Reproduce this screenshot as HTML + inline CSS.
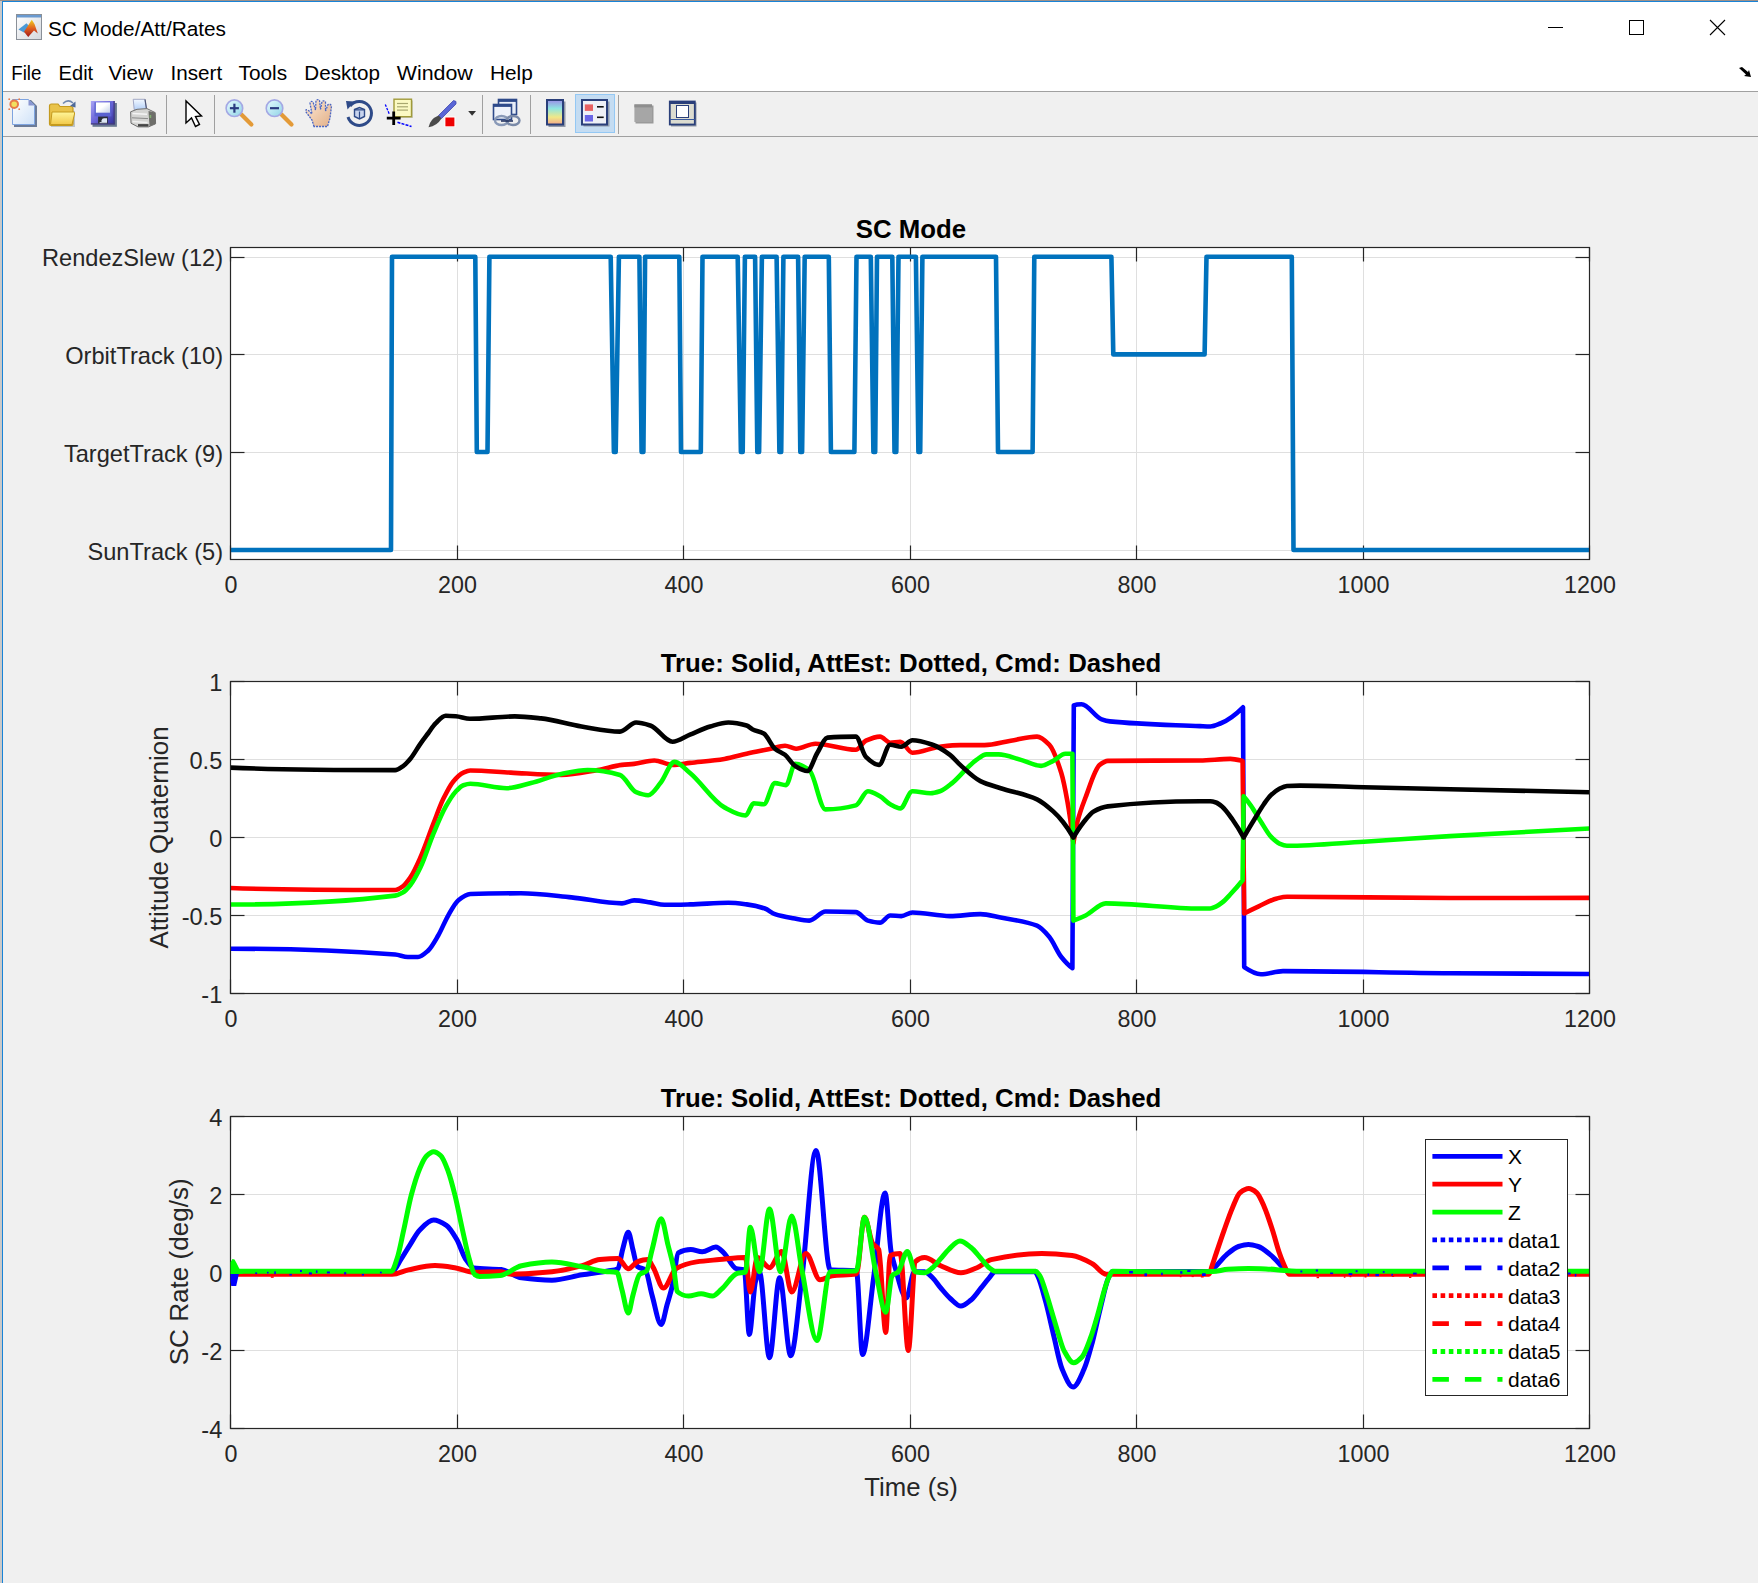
<!DOCTYPE html>
<html><head><meta charset="utf-8"><style>
html,body{margin:0;padding:0;width:1758px;height:1583px;overflow:hidden;background:#f0f0f0;font-family:"Liberation Sans",sans-serif}
.abs{position:absolute}
</style></head><body>
<div class="abs" style="left:0;top:0;width:1758px;height:1px;background:#9c9089"></div>
<div class="abs" style="left:0;top:1px;width:2px;height:1582px;background:#c9c9c9"></div>
<div class="abs" style="left:2px;top:1px;width:1756px;height:1582px;background:#1883d7"></div>
<div class="abs" style="left:3px;top:2px;width:1755px;height:89px;background:#ffffff"></div>
<div class="abs" style="left:3px;top:91px;width:1755px;height:1px;background:#a0a0a0"></div>
<div class="abs" style="left:3px;top:92px;width:1755px;height:44px;background:#f0f0f0"></div>
<div class="abs" style="left:3px;top:136px;width:1755px;height:1px;background:#a0a0a0"></div>
<div class="abs" style="left:3px;top:137px;width:1755px;height:1446px;background:#f0f0f0"></div>
<svg width="1758" height="140" style="position:absolute;left:0;top:0"><defs>
<linearGradient id="gPage" x1="0" y1="0" x2="1" y2="1"><stop offset="0" stop-color="#ffffff"/><stop offset="1" stop-color="#cfe2f8"/></linearGradient>
<linearGradient id="gFold" x1="0" y1="0" x2="0" y2="1"><stop offset="0" stop-color="#fff69a"/><stop offset="1" stop-color="#f2c94a"/></linearGradient>
<linearGradient id="gDisk" x1="0" y1="0" x2="1" y2="1"><stop offset="0" stop-color="#a9a4f4"/><stop offset="0.5" stop-color="#6a64d8"/><stop offset="1" stop-color="#2f2f9a"/></linearGradient>
<linearGradient id="gCbar" x1="0" y1="0" x2="0" y2="1"><stop offset="0" stop-color="#9a8ee8"/><stop offset="0.35" stop-color="#8ee6e0"/><stop offset="0.7" stop-color="#f0e888"/><stop offset="1" stop-color="#f4a888"/></linearGradient>
<linearGradient id="gLens" x1="0" y1="0" x2="1" y2="1"><stop offset="0" stop-color="#e8fbff"/><stop offset="1" stop-color="#8fd4e6"/></linearGradient>
<linearGradient id="gHand" x1="0" y1="0" x2="1" y2="1"><stop offset="0" stop-color="#fde8d4"/><stop offset="1" stop-color="#e2b088"/></linearGradient>
<linearGradient id="gPrint" x1="0" y1="0" x2="0" y2="1"><stop offset="0" stop-color="#f4f4f4"/><stop offset="1" stop-color="#9a9a9a"/></linearGradient>
<linearGradient id="gMat" x1="0" y1="0" x2="1" y2="1"><stop offset="0" stop-color="#ffffff"/><stop offset="1" stop-color="#d4d8de"/></linearGradient>
<linearGradient id="gPeak" x1="0" y1="0" x2="0" y2="1"><stop offset="0" stop-color="#f0d020"/><stop offset="0.5" stop-color="#e06020"/><stop offset="1" stop-color="#a01818"/></linearGradient>
</defs><rect x="16.5" y="14.5" width="25" height="25" fill="url(#gMat)" stroke="#8a9098" stroke-width="1"/><rect x="17" y="15" width="24" height="2.5" fill="#6a9ad0"/><path d="M18.4,29.5 L26.5,23.2 L29.5,26.5 L24.5,32.8 Z" fill="#4a9ad8"/><path d="M24,31.8 L31.8,19.8 L34.5,24 L37.8,33.6 L34,30.5 L28.2,37 Z" fill="url(#gPeak)"/><text x="48" y="35.8" font-family="Liberation Sans, sans-serif" font-size="20.5" fill="#000" textLength="178" lengthAdjust="spacingAndGlyphs">SC Mode/Att/Rates</text><line x1="1548" y1="27.5" x2="1563" y2="27.5" stroke="#000" stroke-width="1"/><rect x="1629.5" y="20.5" width="14" height="14" fill="none" stroke="#000" stroke-width="1"/><path d="M1710,20 L1725,35 M1725,20 L1710,35" stroke="#000" stroke-width="1.1" fill="none"/><path d="M1739,68 L1742,67 L1748,72 L1749,70 L1751,77 L1744,76 L1746,74.5 Z" fill="#000"/><text x="11.2" y="79.6" font-family="Liberation Sans, sans-serif" font-size="20" fill="#000" textLength="30.2" lengthAdjust="spacingAndGlyphs">File</text><text x="58.6" y="79.6" font-family="Liberation Sans, sans-serif" font-size="20" fill="#000" textLength="34.6" lengthAdjust="spacingAndGlyphs">Edit</text><text x="108.4" y="79.6" font-family="Liberation Sans, sans-serif" font-size="20" fill="#000" textLength="44.6" lengthAdjust="spacingAndGlyphs">View</text><text x="170.5" y="79.6" font-family="Liberation Sans, sans-serif" font-size="20" fill="#000" textLength="51.7" lengthAdjust="spacingAndGlyphs">Insert</text><text x="238.5" y="79.6" font-family="Liberation Sans, sans-serif" font-size="20" fill="#000" textLength="48.6" lengthAdjust="spacingAndGlyphs">Tools</text><text x="304.3" y="79.6" font-family="Liberation Sans, sans-serif" font-size="20" fill="#000" textLength="75.7" lengthAdjust="spacingAndGlyphs">Desktop</text><text x="396.8" y="79.6" font-family="Liberation Sans, sans-serif" font-size="20" fill="#000" textLength="76.0" lengthAdjust="spacingAndGlyphs">Window</text><text x="490.0" y="79.6" font-family="Liberation Sans, sans-serif" font-size="20" fill="#000" textLength="42.800000000000004" lengthAdjust="spacingAndGlyphs">Help</text><line x1="166.5" y1="95" x2="166.5" y2="134" stroke="#a0a0a0" stroke-width="1"/><line x1="214.5" y1="95" x2="214.5" y2="134" stroke="#a0a0a0" stroke-width="1"/><line x1="482.5" y1="95" x2="482.5" y2="134" stroke="#a0a0a0" stroke-width="1"/><line x1="530.5" y1="95" x2="530.5" y2="134" stroke="#a0a0a0" stroke-width="1"/><line x1="618.5" y1="95" x2="618.5" y2="134" stroke="#a0a0a0" stroke-width="1"/><path d="M14,106 L14,127 L37,127 L37,106 L31,100 L16,100 Z" fill="#6b7b98"/><path d="M12.5,99.5 L28.5,99.5 L34.5,105.5 L34.5,124.5 L12.5,124.5 Z" fill="url(#gPage)" stroke="#7ea4e0" stroke-width="1"/><path d="M28.5,99.5 L28.5,105.5 L34.5,105.5 Z" fill="#8a96d0"/><circle cx="14.2" cy="104.2" r="3.8" fill="#f2e060" stroke="#e87a4a" stroke-width="2"/><circle cx="9.2" cy="99.2" r="0.9" fill="#e87a4a"/><circle cx="19.2" cy="99.2" r="0.9" fill="#e87a4a"/><circle cx="9.2" cy="109.2" r="0.9" fill="#e87a4a"/><circle cx="19.2" cy="109.2" r="0.9" fill="#e87a4a"/><path d="M51,108 L51,127 L75,127 L75,111 Z" fill="#9aa6b4" opacity="0.6"/><path d="M49.5,106 Q49.5,104 51.5,104 L58,104 L60,106.5 L71,106.5 Q73,106.5 73,108.5 L73,124 Q73,125.5 71.5,125.5 L51,125.5 Q49.5,125.5 49.5,124 Z" fill="#e9c34a" stroke="#c49a1e" stroke-width="1.2"/><path d="M52,112 L73.5,112 Q75,112 74.5,114 L72,124.5 L50.5,124.5 Z" fill="url(#gFold)" stroke="#c49a1e" stroke-width="1"/><path d="M63,103.5 Q68,98.5 73,103" fill="none" stroke="#6f88b0" stroke-width="1.6"/><path d="M75.5,101.5 L75.5,107.5 L70,106 Z" fill="#4f6a9a"/><rect x="92.5" y="103" width="24.4" height="23.8" fill="#687890"/><rect x="90.9" y="101" width="23.8" height="23.3" fill="url(#gDisk)"/><rect x="90.9" y="123.3" width="23.8" height="1.2" fill="#433c78"/><rect x="113.5" y="101" width="1.2" height="23.3" fill="#3f3a78"/><rect x="94.5" y="102.2" width="16.9" height="14.2" fill="#5a62d0"/><linearGradient id="gLbl" x1="0" y1="0" x2="1" y2="1"><stop offset="0.45" stop-color="#ffffff"/><stop offset="1" stop-color="#c4d0e8"/></linearGradient><rect x="95.9" y="102.4" width="14.1" height="10.3" fill="url(#gLbl)"/><rect x="98.1" y="116.6" width="9.7" height="6.9" fill="#2a2e38"/><path d="M101.5,123 L101.5,120.5 Q102,118.2 104,118.2 L107,118.2 L107,123 Z" fill="#dce6f4"/><rect x="99.6" y="122" width="7.4" height="1.2" fill="#b8c0cc"/><linearGradient id="gPaper" x1="0" y1="0" x2="0" y2="1"><stop offset="0" stop-color="#f2f8ff"/><stop offset="1" stop-color="#b4d0f8"/></linearGradient><path d="M133.2,99.3 L145,99.3 L146.6,109.6 L134.2,109.6 Z" fill="url(#gPaper)" stroke="#9aa0c0" stroke-width="0.9"/><path d="M145,99.3 L146.6,109.6" stroke="#505878" stroke-width="1.2"/><path d="M130.6,111.8 L137,109.3 L147,108.6 L155.2,112.6 L155.6,123.8 L148.5,126.9 L138,126.9 L131,123.2 Z" fill="#d4d4d2" stroke="#707070" stroke-width="1"/><path d="M148.5,111 L155.2,112.6 L155.6,123.8 L149.5,126.2 Z" fill="#6e6e6a"/><path d="M132.5,113.5 L147,114.2" stroke="#f4f4f4" stroke-width="1.4"/><path d="M132,117.8 L148,118.6" stroke="#8a8a8a" stroke-width="1"/><path d="M132.5,121.5 L147.5,122.5" stroke="#f0f0f0" stroke-width="1.3"/><path d="M138,125.3 L148.5,125.3" stroke="#454545" stroke-width="2.4"/><rect x="149.6" y="115" width="1.6" height="3" fill="#80b070"/><path d="M186,101 L186,123 L191.5,118 L195.5,126.5 L199.5,124.5 L195.5,116.5 L201.5,116 Z" fill="#fff" stroke="#000" stroke-width="1.4" stroke-linejoin="miter"/><line x1="241.4" y1="114.5" x2="251.4" y2="124.5" stroke="#e39a38" stroke-width="4.2" stroke-linecap="round"/><circle cx="234.4" cy="108.2" r="8.3" fill="url(#gLens)" stroke="#a4a8e4" stroke-width="1.6"/><line x1="229.9" y1="108.2" x2="238.9" y2="108.2" stroke="#2a3a80" stroke-width="2.2"/><line x1="234.4" y1="103.7" x2="234.4" y2="112.7" stroke="#2a3a80" stroke-width="2.2"/><line x1="281.5" y1="114.5" x2="291.5" y2="124.5" stroke="#e39a38" stroke-width="4.2" stroke-linecap="round"/><circle cx="274.5" cy="108.2" r="8.3" fill="url(#gLens)" stroke="#a4a8e4" stroke-width="1.6"/><line x1="270.0" y1="108.2" x2="279.0" y2="108.2" stroke="#2a3a80" stroke-width="2.2"/><path d="M314,126.5 L312,120 L306,112 Q305,109 308,110 L312,114 L310,103 Q311,100.5 313,102 L315.5,110 L316,100.5 Q318,98.8 319.5,100.5 L320.5,109.5 L322,101.5 Q324,100 325.5,102 L325.5,111 L328,104.5 Q330.5,103.5 331.5,106 L330,118 L327.5,126.5 Z" fill="url(#gHand)" stroke="#4a66c4" stroke-width="1.3" stroke-dasharray="2 1"/><path d="M350,106 A12,12 0 1 1 348,117" fill="none" stroke="#2e4a88" stroke-width="3"/><path d="M346,101 L354.5,101.5 L347.5,109.5 Z" fill="#2e4a88"/><path d="M354.5,109.5 L359.5,107.5 L364.5,109.5 L364.5,116.5 L359.5,119 L354.5,116.5 Z" fill="#c8d4ee" stroke="#2e4a88" stroke-width="1.4"/><path d="M359.5,111.5 L359.5,118.5 M355,109.8 L364,109.8" stroke="#2e4a88" stroke-width="1.2"/><rect x="395.5" y="100.5" width="17.5" height="17.5" fill="#a4a888" opacity="0.5"/><rect x="394" y="99.2" width="17.5" height="17.5" fill="#fbfac4" stroke="#a09a3a" stroke-width="1.4"/><line x1="397" y1="103.5" x2="408" y2="103.5" stroke="#a8a870" stroke-width="1.2"/><line x1="397" y1="106.8" x2="408" y2="106.8" stroke="#a8a870" stroke-width="1.2"/><line x1="397" y1="110.1" x2="408" y2="110.1" stroke="#a8a870" stroke-width="1.2"/><path d="M385.3,104.5 L389.5,114.5" stroke="#0000ff" stroke-width="1.3" stroke-dasharray="2.5 1.2"/><path d="M397.5,122.3 L411.5,126.5" stroke="#0000ff" stroke-width="1.5" stroke-dasharray="3 1.2"/><path d="M386.8,118.2 L400.6,118.2 M393.7,111.4 L393.7,125" stroke="#000" stroke-width="2.8"/><path d="M438.5,115.5 L453.5,100.5 L456,101.5 L456,104 L441.5,118.5 Z" fill="#5a66d6" stroke="#3f48b0" stroke-width="0.8"/><path d="M438.5,115.5 L441.5,118.5 Q437,126 428.5,127.3 Q430,119 438.5,115.5 Z" fill="#4a4a4a"/><rect x="444.5" y="116.5" width="11" height="10.5" fill="#ffffff"/><rect x="445.4" y="117.5" width="9" height="8.8" fill="#ee0000"/><path d="M468.2,111.1 L476,111.1 L472.1,115.7 Z" fill="#333"/><rect x="498.5" y="99.5" width="18" height="15" fill="#e8eef8" stroke="#2e4a8a" stroke-width="1.6"/><rect x="498.5" y="99.5" width="18" height="2.4" fill="#2e4a8a"/><rect x="493.5" y="104.5" width="18" height="15" fill="#eef2fa" stroke="#2e4a8a" stroke-width="1.6"/><rect x="493.5" y="104.5" width="18" height="2.4" fill="#2e4a8a"/><ellipse cx="501.5" cy="120.5" rx="6.5" ry="4.5" fill="none" stroke="#8a9ab8" stroke-width="2.4"/><ellipse cx="513" cy="120.5" rx="6.5" ry="4.5" fill="none" stroke="#7a8aa8" stroke-width="2.4"/><line x1="501" y1="121" x2="513" y2="121" stroke="#1a2a5a" stroke-width="1.5"/><rect x="548.5" y="101.5" width="17" height="25.5" fill="#6a7488" opacity="0.7"/><rect x="547" y="100" width="16" height="24.5" fill="url(#gCbar)" stroke="#2a3f7a" stroke-width="2"/><rect x="575.5" y="94.5" width="39" height="38" fill="#c4dcf2" stroke="#94c8f4" stroke-width="1"/><rect x="583.5" y="101.5" width="26" height="25" fill="#7a8090" opacity="0.7"/><rect x="582" y="100" width="25" height="24.5" fill="#eef0f6" stroke="#2a3f7a" stroke-width="2"/><rect x="584.8" y="104.4" width="8.2" height="6.5" fill="#e86262"/><rect x="584.8" y="115" width="8.2" height="6.5" fill="#6a66e6"/><line x1="597" y1="106.8" x2="603.7" y2="106.8" stroke="#111" stroke-width="1.6"/><line x1="597" y1="117.3" x2="603.7" y2="117.3" stroke="#111" stroke-width="1.6"/><rect x="635.5" y="105.5" width="18" height="18" fill="#9a9a9a"/><rect x="634.4" y="104.4" width="17.6" height="17.6" fill="#a6a6a6"/><rect x="634.4" y="104.4" width="17.6" height="3" fill="#8e8e8e"/><rect x="671" y="102.5" width="25.5" height="24" fill="#6a7488" opacity="0.7"/><rect x="669.8" y="101.5" width="25" height="23" fill="#dcdcd0" stroke="#2a3f7a" stroke-width="1.8"/><rect x="669.8" y="101.2" width="25" height="2.8" fill="#2a3f7a"/><rect x="676.5" y="105.5" width="12" height="12" fill="#ffffff" stroke="#2a3f7a" stroke-width="1"/><line x1="669.8" y1="119.5" x2="694.8" y2="119.5" stroke="#3a5aa0" stroke-width="1"/></svg>
<svg width="1758" height="1583" style="position:absolute;left:0;top:0"><rect x="230.5" y="247.5" width="1359.0" height="312.0" fill="#ffffff"/><line x1="457.5" y1="247.5" x2="457.5" y2="559.5" stroke="#dfdfdf" stroke-width="1"/><line x1="683.5" y1="247.5" x2="683.5" y2="559.5" stroke="#dfdfdf" stroke-width="1"/><line x1="910.5" y1="247.5" x2="910.5" y2="559.5" stroke="#dfdfdf" stroke-width="1"/><line x1="1136.5" y1="247.5" x2="1136.5" y2="559.5" stroke="#dfdfdf" stroke-width="1"/><line x1="1363.5" y1="247.5" x2="1363.5" y2="559.5" stroke="#dfdfdf" stroke-width="1"/><line x1="230.5" y1="257.5" x2="1589.5" y2="257.5" stroke="#dfdfdf" stroke-width="1"/><line x1="230.5" y1="354.5" x2="1589.5" y2="354.5" stroke="#dfdfdf" stroke-width="1"/><line x1="230.5" y1="452.5" x2="1589.5" y2="452.5" stroke="#dfdfdf" stroke-width="1"/><line x1="230.5" y1="550.5" x2="1589.5" y2="550.5" stroke="#dfdfdf" stroke-width="1"/><line x1="230.5" y1="247.5" x2="230.5" y2="261.5" stroke="#262626" stroke-width="1.2"/><line x1="230.5" y1="559.5" x2="230.5" y2="545.5" stroke="#262626" stroke-width="1.2"/><line x1="457.5" y1="247.5" x2="457.5" y2="261.5" stroke="#262626" stroke-width="1.2"/><line x1="457.5" y1="559.5" x2="457.5" y2="545.5" stroke="#262626" stroke-width="1.2"/><line x1="683.5" y1="247.5" x2="683.5" y2="261.5" stroke="#262626" stroke-width="1.2"/><line x1="683.5" y1="559.5" x2="683.5" y2="545.5" stroke="#262626" stroke-width="1.2"/><line x1="910.5" y1="247.5" x2="910.5" y2="261.5" stroke="#262626" stroke-width="1.2"/><line x1="910.5" y1="559.5" x2="910.5" y2="545.5" stroke="#262626" stroke-width="1.2"/><line x1="1136.5" y1="247.5" x2="1136.5" y2="261.5" stroke="#262626" stroke-width="1.2"/><line x1="1136.5" y1="559.5" x2="1136.5" y2="545.5" stroke="#262626" stroke-width="1.2"/><line x1="1363.5" y1="247.5" x2="1363.5" y2="261.5" stroke="#262626" stroke-width="1.2"/><line x1="1363.5" y1="559.5" x2="1363.5" y2="545.5" stroke="#262626" stroke-width="1.2"/><line x1="1589.5" y1="247.5" x2="1589.5" y2="261.5" stroke="#262626" stroke-width="1.2"/><line x1="1589.5" y1="559.5" x2="1589.5" y2="545.5" stroke="#262626" stroke-width="1.2"/><line x1="230.5" y1="257.5" x2="244.5" y2="257.5" stroke="#262626" stroke-width="1.2"/><line x1="1589.5" y1="257.5" x2="1575.5" y2="257.5" stroke="#262626" stroke-width="1.2"/><line x1="230.5" y1="354.5" x2="244.5" y2="354.5" stroke="#262626" stroke-width="1.2"/><line x1="1589.5" y1="354.5" x2="1575.5" y2="354.5" stroke="#262626" stroke-width="1.2"/><line x1="230.5" y1="452.5" x2="244.5" y2="452.5" stroke="#262626" stroke-width="1.2"/><line x1="1589.5" y1="452.5" x2="1575.5" y2="452.5" stroke="#262626" stroke-width="1.2"/><line x1="230.5" y1="550.5" x2="244.5" y2="550.5" stroke="#262626" stroke-width="1.2"/><line x1="1589.5" y1="550.5" x2="1575.5" y2="550.5" stroke="#262626" stroke-width="1.2"/><clipPath id="c1"><rect x="230.5" y="247.5" width="1359.0" height="312"/></clipPath><polyline points="230.5,550.0 391.0,550.0 392.0,256.7 475.3,256.7 476.8,452.0 487.5,452.0 489.4,256.7 610.7,256.7 613.9,452.0 615.7,452.0 618.9,256.7 639.4,256.7 641.6,452.0 643.4,452.0 645.1,256.7 679.3,256.7 681.0,452.0 700.8,452.0 702.5,256.7 737.7,256.7 740.9,452.0 742.7,452.0 744.9,256.7 755.1,256.7 757.3,452.0 759.1,452.0 761.9,256.7 776.6,256.7 779.4,452.0 781.2,452.0 783.4,256.7 798.1,256.7 800.3,452.0 802.1,452.0 804.7,256.7 828.8,256.7 830.9,452.0 854.4,452.0 856.5,256.7 870.8,256.7 873.4,452.0 875.2,452.0 877.0,256.7 892.3,256.7 894.5,452.0 896.3,452.0 898.5,256.7 915.9,256.7 918.4,452.0 920.2,452.0 922.4,256.7 996.0,256.7 998.0,452.0 1032.6,452.0 1034.3,256.7 1111.4,256.7 1113.3,354.4 1204.6,354.4 1206.5,256.7 1291.8,256.7 1293.5,550.0 1589.5,550.0" fill="none" stroke="#0072bd" stroke-width="4.6" stroke-linejoin="round" stroke-linecap="round" clip-path="url(#c1)"/><rect x="230.5" y="247.5" width="1359.0" height="312.0" fill="none" stroke="#262626" stroke-width="1.2"/><text x="231.0" y="593.1" font-family="Liberation Sans, sans-serif" font-size="23.3" fill="#262626" text-anchor="middle">0</text><text x="457.5" y="593.1" font-family="Liberation Sans, sans-serif" font-size="23.3" fill="#262626" text-anchor="middle">200</text><text x="684.0" y="593.1" font-family="Liberation Sans, sans-serif" font-size="23.3" fill="#262626" text-anchor="middle">400</text><text x="910.5" y="593.1" font-family="Liberation Sans, sans-serif" font-size="23.3" fill="#262626" text-anchor="middle">600</text><text x="1137.0" y="593.1" font-family="Liberation Sans, sans-serif" font-size="23.3" fill="#262626" text-anchor="middle">800</text><text x="1363.5" y="593.1" font-family="Liberation Sans, sans-serif" font-size="23.3" fill="#262626" text-anchor="middle">1000</text><text x="1590.0" y="593.1" font-family="Liberation Sans, sans-serif" font-size="23.3" fill="#262626" text-anchor="middle">1200</text><text x="223" y="266.3" font-family="Liberation Sans, sans-serif" font-size="23.6" fill="#262626" text-anchor="end">RendezSlew (12)</text><text x="223" y="364.0" font-family="Liberation Sans, sans-serif" font-size="23.6" fill="#262626" text-anchor="end">OrbitTrack (10)</text><text x="223" y="461.6" font-family="Liberation Sans, sans-serif" font-size="23.6" fill="#262626" text-anchor="end">TargetTrack (9)</text><text x="223" y="559.6" font-family="Liberation Sans, sans-serif" font-size="23.6" fill="#262626" text-anchor="end">SunTrack (5)</text><text x="911" y="237.7" font-family="Liberation Sans, sans-serif" font-size="25.8" font-weight="bold" fill="#000" text-anchor="middle">SC Mode</text><rect x="230.5" y="681.5" width="1359.0" height="312.0" fill="#ffffff"/><line x1="457.5" y1="681.5" x2="457.5" y2="993.5" stroke="#dfdfdf" stroke-width="1"/><line x1="683.5" y1="681.5" x2="683.5" y2="993.5" stroke="#dfdfdf" stroke-width="1"/><line x1="910.5" y1="681.5" x2="910.5" y2="993.5" stroke="#dfdfdf" stroke-width="1"/><line x1="1136.5" y1="681.5" x2="1136.5" y2="993.5" stroke="#dfdfdf" stroke-width="1"/><line x1="1363.5" y1="681.5" x2="1363.5" y2="993.5" stroke="#dfdfdf" stroke-width="1"/><line x1="230.5" y1="759.5" x2="1589.5" y2="759.5" stroke="#dfdfdf" stroke-width="1"/><line x1="230.5" y1="837.5" x2="1589.5" y2="837.5" stroke="#dfdfdf" stroke-width="1"/><line x1="230.5" y1="915.5" x2="1589.5" y2="915.5" stroke="#dfdfdf" stroke-width="1"/><line x1="230.5" y1="681.5" x2="230.5" y2="695.5" stroke="#262626" stroke-width="1.2"/><line x1="230.5" y1="993.5" x2="230.5" y2="979.5" stroke="#262626" stroke-width="1.2"/><line x1="457.5" y1="681.5" x2="457.5" y2="695.5" stroke="#262626" stroke-width="1.2"/><line x1="457.5" y1="993.5" x2="457.5" y2="979.5" stroke="#262626" stroke-width="1.2"/><line x1="683.5" y1="681.5" x2="683.5" y2="695.5" stroke="#262626" stroke-width="1.2"/><line x1="683.5" y1="993.5" x2="683.5" y2="979.5" stroke="#262626" stroke-width="1.2"/><line x1="910.5" y1="681.5" x2="910.5" y2="695.5" stroke="#262626" stroke-width="1.2"/><line x1="910.5" y1="993.5" x2="910.5" y2="979.5" stroke="#262626" stroke-width="1.2"/><line x1="1136.5" y1="681.5" x2="1136.5" y2="695.5" stroke="#262626" stroke-width="1.2"/><line x1="1136.5" y1="993.5" x2="1136.5" y2="979.5" stroke="#262626" stroke-width="1.2"/><line x1="1363.5" y1="681.5" x2="1363.5" y2="695.5" stroke="#262626" stroke-width="1.2"/><line x1="1363.5" y1="993.5" x2="1363.5" y2="979.5" stroke="#262626" stroke-width="1.2"/><line x1="1589.5" y1="681.5" x2="1589.5" y2="695.5" stroke="#262626" stroke-width="1.2"/><line x1="1589.5" y1="993.5" x2="1589.5" y2="979.5" stroke="#262626" stroke-width="1.2"/><line x1="230.5" y1="681.5" x2="244.5" y2="681.5" stroke="#262626" stroke-width="1.2"/><line x1="1589.5" y1="681.5" x2="1575.5" y2="681.5" stroke="#262626" stroke-width="1.2"/><line x1="230.5" y1="759.5" x2="244.5" y2="759.5" stroke="#262626" stroke-width="1.2"/><line x1="1589.5" y1="759.5" x2="1575.5" y2="759.5" stroke="#262626" stroke-width="1.2"/><line x1="230.5" y1="837.5" x2="244.5" y2="837.5" stroke="#262626" stroke-width="1.2"/><line x1="1589.5" y1="837.5" x2="1575.5" y2="837.5" stroke="#262626" stroke-width="1.2"/><line x1="230.5" y1="915.5" x2="244.5" y2="915.5" stroke="#262626" stroke-width="1.2"/><line x1="1589.5" y1="915.5" x2="1575.5" y2="915.5" stroke="#262626" stroke-width="1.2"/><line x1="230.5" y1="993.5" x2="244.5" y2="993.5" stroke="#262626" stroke-width="1.2"/><line x1="1589.5" y1="993.5" x2="1575.5" y2="993.5" stroke="#262626" stroke-width="1.2"/><clipPath id="c2"><rect x="230.5" y="681.5" width="1359.0" height="312"/></clipPath><path d="M230.50,948.70 C285.40,948.70 340.30,950.40 395.20,954.50 C399.40,954.81 403.60,957.00 407.80,957.00 C411.20,957.00 414.60,957.00 418.00,957.00 C421.33,957.00 424.67,953.65 428.00,950.70 C431.40,947.69 434.80,941.31 438.20,935.50 C441.57,929.75 444.93,921.06 448.30,915.30 C451.67,909.54 455.03,902.84 458.40,900.20 C462.37,897.09 466.33,894.13 470.30,894.00 C487.17,893.43 504.03,893.30 520.90,893.30 C537.73,893.30 554.57,895.78 571.40,897.40 C588.27,899.03 605.13,903.40 622.00,903.40 C626.03,903.40 630.07,900.40 634.10,900.40 C639.50,900.40 644.90,901.62 650.30,902.40 C655.00,903.08 659.70,904.80 664.40,904.80 C672.93,904.80 681.47,904.59 690.00,904.40 C702.80,904.12 715.60,902.80 728.40,902.80 C734.47,902.80 740.53,903.63 746.60,904.40 C752.67,905.17 758.73,906.47 764.80,908.50 C768.17,909.62 771.53,912.98 774.90,914.10 C780.97,916.13 787.03,917.12 793.10,918.20 C798.50,919.16 803.90,920.60 809.30,920.60 C814.70,920.60 820.10,911.50 825.50,911.50 C835.60,911.50 845.70,911.65 855.80,912.10 C859.83,912.28 863.87,919.52 867.90,920.60 C871.93,921.68 875.97,922.60 880.00,922.60 C883.40,922.60 886.80,915.50 890.20,915.50 C893.90,915.50 897.60,916.10 901.30,916.10 C905.00,916.10 908.70,912.50 912.40,912.50 C924.93,912.50 937.47,916.10 950.00,916.10 C960.13,916.10 970.27,914.10 980.40,914.10 C987.17,914.10 993.93,916.30 1000.70,917.60 C1012.80,919.93 1024.90,920.88 1037.00,925.70 C1041.07,927.32 1045.13,932.01 1049.20,936.80 C1053.23,941.55 1057.27,951.97 1061.30,957.00 C1065.00,961.61 1068.70,965.59 1072.40,968.10 L1073.80,705.30 C1076.37,704.35 1078.93,704.30 1081.50,704.30 C1088.23,704.30 1094.97,717.07 1101.70,719.40 C1104.40,720.34 1107.10,721.12 1109.80,721.40 C1139.87,724.56 1169.93,724.80 1200.00,726.10 C1203.40,726.25 1206.80,726.50 1210.20,726.50 C1213.57,726.50 1216.93,724.84 1220.30,723.50 C1227.87,720.49 1235.43,714.88 1243.00,707.30 L1244.20,967.10 C1249.73,970.81 1255.27,974.20 1260.80,974.20 C1268.20,974.20 1275.60,971.10 1283.00,971.10 C1338.67,971.10 1394.33,972.77 1450.00,973.20 C1496.50,973.56 1543.00,973.88 1589.50,974.00" fill="none" stroke="#0000ff" stroke-width="4.6" stroke-linejoin="round" stroke-linecap="round" clip-path="url(#c2)"/><path d="M230.50,888.00 C285.40,890.00 340.30,890.00 395.20,890.00 C397.73,890.00 400.27,888.04 402.80,886.30 C405.33,884.56 407.87,881.10 410.40,877.40 C413.77,872.49 417.13,864.78 420.50,857.20 C424.70,847.74 428.90,835.12 433.10,824.40 C436.47,815.81 439.83,806.04 443.20,799.10 C446.57,792.16 449.93,785.32 453.30,781.40 C456.67,777.48 460.03,774.07 463.40,772.60 C465.70,771.59 468.00,770.50 470.30,770.50 C483.80,770.50 497.30,771.93 510.80,772.60 C527.63,773.44 544.47,775.00 561.30,775.00 C573.43,775.00 585.57,772.04 597.70,770.00 C605.80,768.64 613.90,765.82 622.00,764.90 C626.03,764.44 630.07,764.33 634.10,763.90 C640.83,763.17 647.57,760.50 654.30,760.50 C660.37,760.50 666.43,764.90 672.50,764.90 C678.33,764.90 684.17,763.57 690.00,762.90 C701.47,761.58 712.93,760.71 724.40,758.90 C731.80,757.73 739.20,755.42 746.60,753.80 C754.70,752.02 762.80,750.41 770.90,748.70 C775.60,747.71 780.30,745.70 785.00,745.70 C788.70,745.70 792.40,748.70 796.10,748.70 C802.53,748.70 808.97,743.70 815.40,743.70 C828.87,743.70 842.33,749.80 855.80,749.80 C859.17,749.80 862.53,742.22 865.90,740.70 C870.60,738.57 875.30,736.60 880.00,736.60 C883.40,736.60 886.80,742.70 890.20,742.70 C893.57,742.70 896.93,741.70 900.30,741.70 C904.33,741.70 908.37,752.80 912.40,752.80 C921.60,752.80 930.80,747.75 940.00,746.70 C946.73,745.93 953.47,745.10 960.20,745.10 C968.30,745.10 976.40,745.10 984.50,745.10 C993.27,745.10 1002.03,742.12 1010.80,740.70 C1019.53,739.29 1028.27,736.60 1037.00,736.60 C1041.07,736.60 1045.13,740.49 1049.20,744.70 C1053.23,748.87 1057.27,759.99 1061.30,773.00 C1063.33,779.56 1065.37,789.98 1067.40,801.30 C1069.40,812.43 1071.40,826.81 1073.40,843.00 L1073.40,843.00 C1074.77,834.80 1076.13,826.86 1077.50,821.50 C1080.20,810.90 1082.90,804.40 1085.60,797.30 C1090.30,784.95 1095.00,768.51 1099.70,764.90 C1102.40,762.83 1105.10,760.93 1107.80,760.90 C1138.53,760.54 1169.27,760.79 1200.00,760.50 C1210.13,760.41 1220.27,758.90 1230.40,758.90 C1234.47,758.90 1238.53,759.98 1242.60,760.90 L1244.20,913.50 C1249.03,911.03 1253.87,908.64 1258.70,906.40 C1264.77,903.58 1270.83,899.82 1276.90,898.40 C1280.27,897.61 1283.63,896.70 1287.00,896.70 C1341.33,896.70 1395.67,898.00 1450.00,898.00 C1496.50,898.00 1543.00,898.00 1589.50,897.90" fill="none" stroke="#ff0000" stroke-width="4.6" stroke-linejoin="round" stroke-linecap="round" clip-path="url(#c2)"/><path d="M230.50,904.50 C285.40,904.50 340.30,902.38 395.20,895.60 C397.73,895.29 400.27,894.03 402.80,892.60 C405.33,891.17 407.87,888.18 410.40,885.00 C413.77,880.77 417.13,874.30 420.50,867.30 C424.70,858.56 428.90,844.53 433.10,834.50 C437.30,824.47 441.50,814.16 445.70,806.70 C449.07,800.72 452.43,795.05 455.80,791.50 C458.33,788.83 460.87,786.02 463.40,785.20 C465.70,784.46 468.00,783.80 470.30,783.80 C482.43,783.80 494.57,788.20 506.70,788.20 C514.80,788.20 522.90,785.09 531.00,783.10 C541.10,780.62 551.20,776.02 561.30,774.00 C570.07,772.24 578.83,770.00 587.60,770.00 C598.40,770.00 609.20,771.82 620.00,775.00 C625.37,776.58 630.73,790.10 636.10,792.20 C640.13,793.78 644.17,795.20 648.20,795.20 C652.27,795.20 656.33,787.94 660.40,783.10 C665.10,777.51 669.80,761.90 674.50,761.90 C679.67,761.90 684.83,768.78 690.00,773.00 C701.47,782.37 712.93,801.28 724.40,807.40 C731.47,811.17 738.53,815.50 745.60,815.50 C748.30,815.50 751.00,803.30 753.70,803.30 C757.07,803.30 760.43,804.30 763.80,804.30 C767.50,804.30 771.20,783.10 774.90,783.10 C778.60,783.10 782.30,785.10 786.00,785.10 C789.03,785.10 792.07,763.90 795.10,763.90 C799.83,763.90 804.57,766.60 809.30,770.00 C814.70,773.88 820.10,809.40 825.50,809.40 C835.60,809.40 845.70,808.11 855.80,805.40 C859.83,804.32 863.87,791.20 867.90,791.20 C871.93,791.20 875.97,794.07 880.00,796.30 C883.40,798.18 886.80,802.48 890.20,804.30 C893.57,806.10 896.93,808.40 900.30,808.40 C904.33,808.40 908.37,791.20 912.40,791.20 C918.47,791.20 924.53,793.20 930.60,793.20 C933.73,793.20 936.87,792.19 940.00,791.20 C944.03,789.93 948.07,786.31 952.10,783.10 C956.83,779.33 961.57,773.46 966.30,769.00 C969.67,765.83 973.03,762.19 976.40,759.90 C979.77,757.61 983.13,754.40 986.50,754.40 C990.53,754.40 994.57,754.40 998.60,754.40 C1006.03,754.40 1013.47,757.89 1020.90,759.90 C1027.63,761.72 1034.37,765.90 1041.10,765.90 C1045.13,765.90 1049.17,762.85 1053.20,760.90 C1057.27,758.94 1061.33,753.80 1065.40,753.80 C1067.73,753.80 1070.07,753.80 1072.40,753.80 L1073.40,920.60 C1077.47,919.18 1081.53,917.47 1085.60,915.50 C1092.33,912.23 1099.07,903.40 1105.80,903.40 C1137.20,903.40 1168.60,908.50 1200.00,908.50 C1203.40,908.50 1206.80,908.50 1210.20,908.50 C1212.23,908.50 1214.27,907.32 1216.30,906.40 C1218.30,905.49 1220.30,903.98 1222.30,902.40 C1225.00,900.26 1227.70,897.18 1230.40,894.30 C1234.47,889.96 1238.53,885.28 1242.60,880.20 L1243.60,796.30 C1245.97,799.03 1248.33,802.06 1250.70,805.40 C1254.07,810.15 1257.43,816.29 1260.80,821.50 C1264.17,826.71 1267.53,833.14 1270.90,836.70 C1273.60,839.55 1276.30,842.21 1279.00,843.40 C1281.67,844.57 1284.33,845.80 1287.00,845.80 C1312.63,845.80 1338.27,843.20 1363.90,841.70 C1392.60,840.02 1421.30,837.81 1450.00,836.10 C1496.50,833.32 1543.00,830.73 1589.50,828.50" fill="none" stroke="#00ff00" stroke-width="4.6" stroke-linejoin="round" stroke-linecap="round" clip-path="url(#c2)"/><path d="M230.50,767.60 C285.40,770.10 340.30,770.10 395.20,770.10 C397.73,770.10 400.27,767.99 402.80,766.30 C405.33,764.61 407.87,761.71 410.40,758.70 C413.77,754.70 417.13,748.36 420.50,743.60 C423.00,740.07 425.50,736.84 428.00,733.50 C430.53,730.11 433.07,725.87 435.60,723.40 C438.97,720.12 442.33,715.80 445.70,715.80 C449.07,715.80 452.43,716.05 455.80,716.30 C460.53,716.65 465.27,718.80 470.00,718.80 C484.93,718.80 499.87,716.40 514.80,716.40 C523.53,716.40 532.27,717.46 541.00,718.40 C554.50,719.85 568.00,724.35 581.50,726.50 C594.33,728.54 607.17,731.60 620.00,731.60 C625.37,731.60 630.73,722.50 636.10,722.50 C640.83,722.50 645.57,724.01 650.30,725.50 C657.70,727.83 665.10,741.70 672.50,741.70 C678.33,741.70 684.17,736.95 690.00,734.60 C696.73,731.88 703.47,728.40 710.20,726.50 C716.27,724.79 722.33,722.50 728.40,722.50 C734.47,722.50 740.53,723.73 746.60,725.50 C748.63,726.09 750.67,728.51 752.70,729.50 C756.40,731.30 760.10,731.45 763.80,733.60 C767.50,735.75 771.20,745.62 774.90,748.70 C778.27,751.50 781.63,752.18 785.00,754.80 C788.37,757.42 791.73,763.83 795.10,765.90 C799.17,768.40 803.23,771.00 807.30,771.00 C810.67,771.00 814.03,758.32 817.40,752.80 C820.77,747.28 824.13,737.87 827.50,737.60 C836.93,736.83 846.37,736.60 855.80,736.60 C859.17,736.60 862.53,753.55 865.90,756.80 C870.27,761.02 874.63,764.90 879.00,764.90 C882.73,764.90 886.47,744.70 890.20,744.70 C893.90,744.70 897.60,746.70 901.30,746.70 C905.00,746.70 908.70,740.30 912.40,740.30 C919.13,740.30 925.87,742.54 932.60,744.70 C938.40,746.56 944.20,750.46 950.00,754.80 C953.40,757.35 956.80,761.85 960.20,764.90 C966.93,770.94 973.67,777.82 980.40,781.10 C987.17,784.40 993.93,785.98 1000.70,788.20 C1012.80,792.17 1024.90,793.75 1037.00,799.30 C1042.40,801.78 1047.80,806.56 1053.20,811.40 C1056.47,814.33 1059.73,817.91 1063.00,822.00 C1066.47,826.34 1069.93,831.60 1073.40,837.50 L1073.40,837.50 C1076.60,832.02 1079.80,827.05 1083.00,823.00 C1086.57,818.48 1090.13,813.35 1093.70,811.40 C1098.40,808.83 1103.10,806.95 1107.80,806.40 C1138.53,802.82 1169.27,801.30 1200.00,801.30 C1203.40,801.30 1206.80,801.30 1210.20,801.30 C1212.13,801.30 1214.07,801.89 1216.00,802.50 C1218.00,803.13 1220.00,804.81 1222.00,806.50 C1225.50,809.45 1229.00,814.59 1232.50,819.50 C1236.20,824.69 1239.90,830.77 1243.60,837.50 L1243.60,837.50 C1247.97,829.87 1252.33,822.58 1256.70,815.50 C1259.13,811.56 1261.57,807.43 1264.00,804.00 C1266.30,800.76 1268.60,797.42 1270.90,795.20 C1273.60,792.60 1276.30,790.36 1279.00,789.00 C1281.67,787.66 1284.33,786.16 1287.00,786.00 C1291.33,785.74 1295.67,785.60 1300.00,785.60 C1321.30,785.60 1342.60,786.69 1363.90,787.20 C1392.60,787.89 1421.30,788.56 1450.00,789.20 C1496.50,790.24 1543.00,791.25 1589.50,792.20" fill="none" stroke="#000000" stroke-width="4.6" stroke-linejoin="round" stroke-linecap="round" clip-path="url(#c2)"/><rect x="230.5" y="681.5" width="1359.0" height="312.0" fill="none" stroke="#262626" stroke-width="1.2"/><text x="231.0" y="1027.1" font-family="Liberation Sans, sans-serif" font-size="23.3" fill="#262626" text-anchor="middle">0</text><text x="457.5" y="1027.1" font-family="Liberation Sans, sans-serif" font-size="23.3" fill="#262626" text-anchor="middle">200</text><text x="684.0" y="1027.1" font-family="Liberation Sans, sans-serif" font-size="23.3" fill="#262626" text-anchor="middle">400</text><text x="910.5" y="1027.1" font-family="Liberation Sans, sans-serif" font-size="23.3" fill="#262626" text-anchor="middle">600</text><text x="1137.0" y="1027.1" font-family="Liberation Sans, sans-serif" font-size="23.3" fill="#262626" text-anchor="middle">800</text><text x="1363.5" y="1027.1" font-family="Liberation Sans, sans-serif" font-size="23.3" fill="#262626" text-anchor="middle">1000</text><text x="1590.0" y="1027.1" font-family="Liberation Sans, sans-serif" font-size="23.3" fill="#262626" text-anchor="middle">1200</text><text x="222.3" y="691.0" font-family="Liberation Sans, sans-serif" font-size="23.6" fill="#262626" text-anchor="end">1</text><text x="222.3" y="769.0" font-family="Liberation Sans, sans-serif" font-size="23.6" fill="#262626" text-anchor="end">0.5</text><text x="222.3" y="847.0" font-family="Liberation Sans, sans-serif" font-size="23.6" fill="#262626" text-anchor="end">0</text><text x="222.3" y="925.0" font-family="Liberation Sans, sans-serif" font-size="23.6" fill="#262626" text-anchor="end">-0.5</text><text x="222.3" y="1003.0" font-family="Liberation Sans, sans-serif" font-size="23.6" fill="#262626" text-anchor="end">-1</text><text x="911" y="671.7" font-family="Liberation Sans, sans-serif" font-size="25.8" font-weight="bold" fill="#000" text-anchor="middle">True: Solid, AttEst: Dotted, Cmd: Dashed</text><text x="168" y="837.5" font-family="Liberation Sans, sans-serif" font-size="26.5" fill="#262626" text-anchor="middle" textLength="222" lengthAdjust="spacingAndGlyphs" transform="rotate(-90 168 837.5)">Attitude Quaternion</text><rect x="230.5" y="1116.5" width="1359.0" height="312.0" fill="#ffffff"/><line x1="457.5" y1="1116.5" x2="457.5" y2="1428.5" stroke="#dfdfdf" stroke-width="1"/><line x1="683.5" y1="1116.5" x2="683.5" y2="1428.5" stroke="#dfdfdf" stroke-width="1"/><line x1="910.5" y1="1116.5" x2="910.5" y2="1428.5" stroke="#dfdfdf" stroke-width="1"/><line x1="1136.5" y1="1116.5" x2="1136.5" y2="1428.5" stroke="#dfdfdf" stroke-width="1"/><line x1="1363.5" y1="1116.5" x2="1363.5" y2="1428.5" stroke="#dfdfdf" stroke-width="1"/><line x1="230.5" y1="1194.5" x2="1589.5" y2="1194.5" stroke="#dfdfdf" stroke-width="1"/><line x1="230.5" y1="1272.5" x2="1589.5" y2="1272.5" stroke="#dfdfdf" stroke-width="1"/><line x1="230.5" y1="1350.5" x2="1589.5" y2="1350.5" stroke="#dfdfdf" stroke-width="1"/><line x1="230.5" y1="1116.5" x2="230.5" y2="1130.5" stroke="#262626" stroke-width="1.2"/><line x1="230.5" y1="1428.5" x2="230.5" y2="1414.5" stroke="#262626" stroke-width="1.2"/><line x1="457.5" y1="1116.5" x2="457.5" y2="1130.5" stroke="#262626" stroke-width="1.2"/><line x1="457.5" y1="1428.5" x2="457.5" y2="1414.5" stroke="#262626" stroke-width="1.2"/><line x1="683.5" y1="1116.5" x2="683.5" y2="1130.5" stroke="#262626" stroke-width="1.2"/><line x1="683.5" y1="1428.5" x2="683.5" y2="1414.5" stroke="#262626" stroke-width="1.2"/><line x1="910.5" y1="1116.5" x2="910.5" y2="1130.5" stroke="#262626" stroke-width="1.2"/><line x1="910.5" y1="1428.5" x2="910.5" y2="1414.5" stroke="#262626" stroke-width="1.2"/><line x1="1136.5" y1="1116.5" x2="1136.5" y2="1130.5" stroke="#262626" stroke-width="1.2"/><line x1="1136.5" y1="1428.5" x2="1136.5" y2="1414.5" stroke="#262626" stroke-width="1.2"/><line x1="1363.5" y1="1116.5" x2="1363.5" y2="1130.5" stroke="#262626" stroke-width="1.2"/><line x1="1363.5" y1="1428.5" x2="1363.5" y2="1414.5" stroke="#262626" stroke-width="1.2"/><line x1="1589.5" y1="1116.5" x2="1589.5" y2="1130.5" stroke="#262626" stroke-width="1.2"/><line x1="1589.5" y1="1428.5" x2="1589.5" y2="1414.5" stroke="#262626" stroke-width="1.2"/><line x1="230.5" y1="1116.5" x2="244.5" y2="1116.5" stroke="#262626" stroke-width="1.2"/><line x1="1589.5" y1="1116.5" x2="1575.5" y2="1116.5" stroke="#262626" stroke-width="1.2"/><line x1="230.5" y1="1194.5" x2="244.5" y2="1194.5" stroke="#262626" stroke-width="1.2"/><line x1="1589.5" y1="1194.5" x2="1575.5" y2="1194.5" stroke="#262626" stroke-width="1.2"/><line x1="230.5" y1="1272.5" x2="244.5" y2="1272.5" stroke="#262626" stroke-width="1.2"/><line x1="1589.5" y1="1272.5" x2="1575.5" y2="1272.5" stroke="#262626" stroke-width="1.2"/><line x1="230.5" y1="1350.5" x2="244.5" y2="1350.5" stroke="#262626" stroke-width="1.2"/><line x1="1589.5" y1="1350.5" x2="1575.5" y2="1350.5" stroke="#262626" stroke-width="1.2"/><line x1="230.5" y1="1428.5" x2="244.5" y2="1428.5" stroke="#262626" stroke-width="1.2"/><line x1="1589.5" y1="1428.5" x2="1575.5" y2="1428.5" stroke="#262626" stroke-width="1.2"/><clipPath id="c3"><rect x="230.5" y="1116.5" width="1359.0" height="312"/></clipPath><path d="M230.50,1271.50 C234.33,1271.50 238.17,1271.50 242.00,1271.50 C292.10,1271.50 342.20,1271.50 392.30,1271.50 C395.17,1271.50 398.03,1263.70 400.90,1259.40 C404.03,1254.70 407.17,1249.17 410.30,1244.30 C413.47,1239.38 416.63,1233.15 419.80,1230.00 C424.40,1225.43 429.00,1220.10 433.60,1220.10 C437.87,1220.10 442.13,1222.58 446.40,1225.30 C449.87,1227.51 453.33,1233.58 456.80,1239.50 C459.63,1244.34 462.47,1254.28 465.30,1258.50 C468.13,1262.72 470.97,1267.63 473.80,1268.00 C482.97,1269.20 492.13,1268.63 501.30,1269.60 C508.03,1270.31 514.77,1276.87 521.50,1277.80 C531.63,1279.20 541.77,1280.20 551.90,1280.20 C562.00,1280.20 572.10,1276.43 582.20,1274.80 C590.73,1273.42 599.27,1272.57 607.80,1271.00 C611.20,1270.37 614.60,1270.35 618.00,1268.70 C619.50,1267.97 621.00,1255.31 622.50,1250.00 C624.43,1243.15 626.37,1232.30 628.30,1232.30 C629.87,1232.30 631.43,1244.11 633.00,1250.00 C634.47,1255.51 635.93,1265.28 637.40,1266.50 C640.03,1268.70 642.67,1267.82 645.30,1269.90 C647.53,1271.66 649.77,1287.25 652.00,1295.00 C655.07,1305.64 658.13,1324.50 661.20,1324.50 C663.13,1324.50 665.07,1311.76 667.00,1305.00 C668.87,1298.47 670.73,1292.82 672.60,1284.60 C674.50,1276.23 676.40,1253.91 678.30,1252.80 C682.47,1250.36 686.63,1249.40 690.80,1249.40 C694.60,1249.40 698.40,1251.70 702.20,1251.70 C706.73,1251.70 711.27,1247.10 715.80,1247.10 C718.47,1247.10 721.13,1250.41 723.80,1252.80 C727.97,1256.53 732.13,1267.64 736.30,1268.70 C738.97,1269.38 741.63,1269.04 744.30,1269.90 C745.97,1270.43 747.63,1334.40 749.30,1334.40 C751.33,1334.40 753.37,1289.61 755.40,1281.90 C756.73,1276.84 758.07,1271.70 759.40,1271.70 C762.77,1271.70 766.13,1357.70 769.50,1357.70 C772.87,1357.70 776.23,1277.80 779.60,1277.80 C783.30,1277.80 787.00,1355.70 790.70,1355.70 C794.43,1355.70 798.17,1307.00 801.90,1277.80 C806.60,1241.04 811.30,1150.40 816.00,1150.40 C820.73,1150.40 825.47,1269.30 830.20,1269.70 C838.93,1270.44 847.67,1269.86 856.40,1270.70 C858.43,1270.90 860.47,1354.60 862.50,1354.60 C866.20,1354.60 869.90,1304.22 873.60,1277.80 C877.43,1250.42 881.27,1192.90 885.10,1192.90 C887.10,1192.90 889.10,1240.54 891.10,1251.50 C892.47,1258.99 893.83,1263.16 895.20,1267.70 C898.90,1279.99 902.60,1298.00 906.30,1298.00 C909.00,1298.00 911.70,1271.70 914.40,1271.70 C917.77,1271.70 921.13,1271.70 924.50,1271.70 C927.20,1271.70 929.90,1275.26 932.60,1277.80 C935.30,1280.34 938.00,1284.74 940.70,1287.90 C944.07,1291.84 947.43,1296.11 950.80,1299.00 C954.17,1301.89 957.53,1306.10 960.90,1306.10 C964.27,1306.10 967.63,1302.70 971.00,1300.00 C974.37,1297.30 977.73,1292.02 981.10,1287.90 C983.80,1284.60 986.50,1280.81 989.20,1277.80 C991.20,1275.57 993.20,1271.70 995.20,1271.70 C1008.47,1271.70 1021.73,1271.70 1035.00,1271.70 C1035.90,1271.70 1036.80,1274.04 1037.70,1275.80 C1040.40,1281.07 1043.10,1292.18 1045.80,1302.10 C1048.50,1312.02 1051.20,1325.29 1053.90,1336.40 C1056.60,1347.51 1059.30,1362.38 1062.00,1368.80 C1065.70,1377.60 1069.40,1387.00 1073.10,1387.00 C1076.80,1387.00 1080.50,1377.00 1084.20,1368.80 C1086.90,1362.81 1089.60,1352.44 1092.30,1342.50 C1095.00,1332.56 1097.70,1318.84 1100.40,1308.10 C1103.10,1297.36 1105.80,1283.52 1108.50,1277.80 C1109.83,1274.97 1111.17,1271.50 1112.50,1271.50 C1145.00,1271.50 1177.50,1271.50 1210.00,1271.50 C1211.43,1271.50 1212.87,1269.14 1214.30,1267.80 C1218.33,1264.02 1222.37,1258.29 1226.40,1254.90 C1230.43,1251.51 1234.47,1247.69 1238.50,1246.50 C1241.80,1245.53 1245.10,1244.60 1248.40,1244.60 C1251.67,1244.60 1254.93,1245.53 1258.20,1246.50 C1262.00,1247.63 1265.80,1251.06 1269.60,1254.10 C1273.40,1257.14 1277.20,1261.13 1281.00,1265.50 C1282.17,1266.84 1283.33,1269.25 1284.50,1270.00 C1285.67,1270.75 1286.83,1271.50 1288.00,1271.50 C1388.50,1271.50 1489.00,1271.50 1589.50,1271.50" fill="none" stroke="#0000ff" stroke-width="5.0" stroke-linejoin="round" stroke-linecap="round" clip-path="url(#c3)"/><path d="M230.50,1274.30 C284.43,1274.30 338.37,1274.30 392.30,1274.30 C397.67,1274.30 403.03,1271.01 408.40,1269.90 C417.27,1268.06 426.13,1265.60 435.00,1265.60 C441.93,1265.60 448.87,1266.90 455.80,1268.00 C461.50,1268.91 467.20,1272.20 472.90,1272.20 C481.93,1272.20 490.97,1271.80 500.00,1271.80 C503.80,1271.80 507.60,1274.20 511.40,1274.20 C524.90,1274.20 538.40,1273.00 551.90,1271.70 C562.00,1270.72 572.10,1268.31 582.20,1265.70 C588.07,1264.18 593.93,1260.21 599.80,1259.60 C605.87,1258.97 611.93,1258.50 618.00,1258.50 C621.43,1258.50 624.87,1268.70 628.30,1268.70 C631.33,1268.70 634.37,1262.96 637.40,1261.90 C640.80,1260.71 644.20,1259.60 647.60,1259.60 C649.50,1259.60 651.40,1264.51 653.30,1267.60 C656.70,1273.13 660.10,1288.10 663.50,1288.10 C667.67,1288.10 671.83,1271.10 676.00,1268.70 C682.83,1264.76 689.67,1262.97 696.50,1261.90 C704.10,1260.71 711.70,1260.30 719.30,1259.60 C728.00,1258.80 736.70,1257.40 745.40,1257.40 C747.03,1257.40 748.67,1292.00 750.30,1292.00 C752.67,1292.00 755.03,1257.60 757.40,1257.60 C761.43,1257.60 765.47,1267.70 769.50,1267.70 C773.53,1267.70 777.57,1251.50 781.60,1251.50 C784.97,1251.50 788.33,1292.00 791.70,1292.00 C796.43,1292.00 801.17,1253.50 805.90,1253.50 C810.60,1253.50 815.30,1279.80 820.00,1279.80 C824.07,1279.80 828.13,1276.37 832.20,1275.80 C840.27,1274.66 848.33,1275.37 856.40,1273.80 C859.10,1273.27 861.80,1217.20 864.50,1217.20 C867.20,1217.20 869.90,1239.37 872.60,1243.40 C874.63,1246.43 876.67,1245.83 878.70,1249.50 C881.07,1253.77 883.43,1332.40 885.80,1332.40 C887.23,1332.40 888.67,1256.28 890.10,1255.60 C893.47,1254.01 896.83,1253.50 900.20,1253.50 C902.90,1253.50 905.60,1350.60 908.30,1350.60 C910.67,1350.60 913.03,1263.69 915.40,1261.60 C918.43,1258.92 921.47,1257.60 924.50,1257.60 C929.90,1257.60 935.30,1263.46 940.70,1265.70 C947.43,1268.50 954.17,1272.80 960.90,1272.80 C966.27,1272.80 971.63,1269.90 977.00,1267.70 C981.73,1265.76 986.47,1260.67 991.20,1259.60 C1008.03,1255.78 1024.87,1253.50 1041.70,1253.50 C1051.83,1253.50 1061.97,1254.35 1072.10,1255.60 C1078.83,1256.43 1085.57,1260.11 1092.30,1263.70 C1097.00,1266.20 1101.70,1274.30 1106.40,1274.30 C1140.60,1274.30 1174.80,1274.30 1209.00,1274.30 C1210.00,1274.30 1211.00,1268.87 1212.00,1266.00 C1213.40,1261.98 1214.80,1257.55 1216.20,1253.40 C1218.80,1245.69 1221.40,1237.91 1224.00,1230.60 C1226.80,1222.73 1229.60,1214.32 1232.40,1207.90 C1234.93,1202.09 1237.47,1194.64 1240.00,1192.70 C1242.93,1190.45 1245.87,1188.60 1248.80,1188.60 C1251.43,1188.60 1254.07,1190.56 1256.70,1192.70 C1259.37,1194.87 1262.03,1201.80 1264.70,1207.90 C1267.33,1213.93 1269.97,1222.49 1272.60,1230.60 C1274.90,1237.68 1277.20,1246.93 1279.50,1253.40 C1281.33,1258.56 1283.17,1263.34 1285.00,1267.00 C1286.43,1269.86 1287.87,1274.30 1289.30,1274.30 C1389.37,1274.30 1489.43,1274.30 1589.50,1274.30" fill="none" stroke="#ff0000" stroke-width="5.0" stroke-linejoin="round" stroke-linecap="round" clip-path="url(#c3)"/><path d="M230.50,1271.30 C234.33,1271.30 238.17,1271.30 242.00,1271.30 C291.80,1271.30 341.60,1271.30 391.40,1271.30 C393.30,1271.30 395.20,1264.07 397.10,1258.50 C399.30,1252.05 401.50,1239.80 403.70,1230.00 C406.23,1218.72 408.77,1204.47 411.30,1195.00 C414.13,1184.40 416.97,1174.95 419.80,1168.40 C422.00,1163.31 424.20,1158.11 426.40,1156.10 C428.80,1153.91 431.20,1151.80 433.60,1151.80 C435.97,1151.80 438.33,1153.59 440.70,1155.60 C443.20,1157.72 445.70,1164.69 448.20,1171.30 C450.43,1177.20 452.67,1186.09 454.90,1195.00 C457.43,1205.11 459.97,1218.72 462.50,1230.00 C464.70,1239.80 466.90,1251.02 469.10,1258.50 C471.00,1264.96 472.90,1273.29 474.80,1274.60 C476.37,1275.68 477.93,1276.50 479.50,1276.50 C486.33,1276.50 493.17,1276.10 500.00,1275.50 C507.17,1274.87 514.33,1267.12 521.50,1265.70 C531.63,1263.69 541.77,1262.00 551.90,1262.00 C562.00,1262.00 572.10,1264.88 582.20,1266.70 C589.80,1268.07 597.40,1270.63 605.00,1271.50 C608.97,1271.96 612.93,1271.75 616.90,1272.50 C618.60,1272.82 620.30,1283.99 622.00,1290.00 C624.10,1297.42 626.20,1313.00 628.30,1313.00 C629.87,1313.00 631.43,1300.42 633.00,1295.00 C635.20,1287.39 637.40,1276.28 639.60,1274.40 C641.90,1272.43 644.20,1273.07 646.50,1271.00 C648.33,1269.35 650.17,1256.63 652.00,1250.00 C655.07,1238.91 658.13,1218.70 661.20,1218.70 C663.47,1218.70 665.73,1235.99 668.00,1245.00 C669.93,1252.69 671.87,1258.67 673.80,1268.70 C674.93,1274.58 676.07,1290.49 677.20,1291.50 C681.00,1294.87 684.80,1296.00 688.60,1296.00 C692.77,1296.00 696.93,1293.80 701.10,1293.80 C704.87,1293.80 708.63,1296.00 712.40,1296.00 C715.43,1296.00 718.47,1291.75 721.50,1289.20 C726.83,1284.71 732.17,1274.60 737.50,1273.30 C740.13,1272.66 742.77,1272.95 745.40,1272.10 C747.03,1271.57 748.67,1227.30 750.30,1227.30 C753.33,1227.30 756.37,1271.70 759.40,1271.70 C762.77,1271.70 766.13,1209.10 769.50,1209.10 C773.20,1209.10 776.90,1271.70 780.60,1271.70 C784.30,1271.70 788.00,1216.10 791.70,1216.10 C795.10,1216.10 798.50,1252.79 801.90,1269.70 C806.93,1294.74 811.97,1340.50 817.00,1340.50 C821.40,1340.50 825.80,1272.07 830.20,1271.70 C838.93,1270.96 847.67,1271.50 856.40,1270.70 C859.10,1270.45 861.80,1217.20 864.50,1217.20 C868.23,1217.20 871.97,1255.31 875.70,1271.70 C879.07,1286.48 882.43,1312.20 885.80,1312.20 C887.90,1312.20 890.00,1278.32 892.10,1275.80 C894.13,1273.36 896.17,1273.73 898.20,1271.70 C901.23,1268.68 904.27,1251.50 907.30,1251.50 C910.00,1251.50 912.70,1271.07 915.40,1271.70 C918.43,1272.41 921.47,1272.80 924.50,1272.80 C927.20,1272.80 929.90,1269.88 932.60,1267.70 C935.30,1265.52 938.00,1261.65 940.70,1258.60 C943.37,1255.59 946.03,1251.96 948.70,1249.50 C952.43,1246.06 956.17,1241.00 959.90,1241.00 C963.60,1241.00 967.30,1244.66 971.00,1247.50 C974.37,1250.08 977.73,1254.86 981.10,1258.60 C983.80,1261.60 986.50,1265.62 989.20,1267.70 C991.20,1269.24 993.20,1271.30 995.20,1271.30 C1008.70,1271.30 1022.20,1271.30 1035.70,1271.30 C1037.13,1271.30 1038.57,1273.80 1040.00,1276.00 C1041.93,1278.96 1043.87,1286.19 1045.80,1292.00 C1047.83,1298.12 1049.87,1305.41 1051.90,1312.20 C1053.90,1318.88 1055.90,1326.07 1057.90,1332.40 C1059.93,1338.83 1061.97,1346.91 1064.00,1350.60 C1067.23,1356.47 1070.47,1362.70 1073.70,1362.70 C1076.53,1362.70 1079.37,1359.76 1082.20,1356.70 C1084.90,1353.79 1087.60,1345.67 1090.30,1338.50 C1093.00,1331.33 1095.70,1321.59 1098.40,1312.20 C1100.40,1305.24 1102.40,1296.37 1104.40,1289.90 C1105.77,1285.48 1107.13,1280.90 1108.50,1278.00 C1109.83,1275.17 1111.17,1271.30 1112.50,1271.30 C1138.33,1271.30 1164.17,1272.00 1190.00,1272.00 C1197.57,1272.00 1205.13,1271.85 1212.70,1271.60 C1217.77,1271.43 1222.83,1269.59 1227.90,1269.30 C1234.73,1268.91 1241.57,1268.60 1248.40,1268.60 C1254.20,1268.60 1260.00,1268.74 1265.80,1268.90 C1273.40,1269.11 1281.00,1270.38 1288.60,1270.80 C1292.40,1271.01 1296.20,1271.30 1300.00,1271.30 C1396.50,1271.30 1493.00,1271.30 1589.50,1271.30" fill="none" stroke="#00ff00" stroke-width="5.0" stroke-linejoin="round" stroke-linecap="round" clip-path="url(#c3)"/><rect x="230.5" y="1116.5" width="1359.0" height="312.0" fill="none" stroke="#262626" stroke-width="1.2"/><text x="231.0" y="1462.1" font-family="Liberation Sans, sans-serif" font-size="23.3" fill="#262626" text-anchor="middle">0</text><text x="457.5" y="1462.1" font-family="Liberation Sans, sans-serif" font-size="23.3" fill="#262626" text-anchor="middle">200</text><text x="684.0" y="1462.1" font-family="Liberation Sans, sans-serif" font-size="23.3" fill="#262626" text-anchor="middle">400</text><text x="910.5" y="1462.1" font-family="Liberation Sans, sans-serif" font-size="23.3" fill="#262626" text-anchor="middle">600</text><text x="1137.0" y="1462.1" font-family="Liberation Sans, sans-serif" font-size="23.3" fill="#262626" text-anchor="middle">800</text><text x="1363.5" y="1462.1" font-family="Liberation Sans, sans-serif" font-size="23.3" fill="#262626" text-anchor="middle">1000</text><text x="1590.0" y="1462.1" font-family="Liberation Sans, sans-serif" font-size="23.3" fill="#262626" text-anchor="middle">1200</text><text x="222.3" y="1126.0" font-family="Liberation Sans, sans-serif" font-size="23.6" fill="#262626" text-anchor="end">4</text><text x="222.3" y="1204.0" font-family="Liberation Sans, sans-serif" font-size="23.6" fill="#262626" text-anchor="end">2</text><text x="222.3" y="1282.0" font-family="Liberation Sans, sans-serif" font-size="23.6" fill="#262626" text-anchor="end">0</text><text x="222.3" y="1360.0" font-family="Liberation Sans, sans-serif" font-size="23.6" fill="#262626" text-anchor="end">-2</text><text x="222.3" y="1438.0" font-family="Liberation Sans, sans-serif" font-size="23.6" fill="#262626" text-anchor="end">-4</text><text x="911" y="1106.7" font-family="Liberation Sans, sans-serif" font-size="25.8" font-weight="bold" fill="#000" text-anchor="middle">True: Solid, AttEst: Dotted, Cmd: Dashed</text><text x="188.3" y="1271.8" font-family="Liberation Sans, sans-serif" font-size="26.5" fill="#262626" text-anchor="middle" textLength="187" lengthAdjust="spacingAndGlyphs" transform="rotate(-90 188.3 1271.8)">SC Rate (deg/s)</text><text x="911" y="1495.7" font-family="Liberation Sans, sans-serif" font-size="26" fill="#262626" text-anchor="middle" textLength="93.5" lengthAdjust="spacingAndGlyphs">Time (s)</text><rect x="255.2" y="1272.4" width="1.9" height="1.6" fill="#0000ff"/><rect x="267.0" y="1271.8" width="1.6" height="1.6" fill="#0000ff"/><rect x="274.2" y="1271.4" width="1.7" height="2.7" fill="#0000ff"/><rect x="270.8" y="1276.3" width="2.9" height="1.5" fill="#ff0000"/><rect x="289.4" y="1273.9" width="2.5" height="1.6" fill="#0000ff"/><rect x="300.0" y="1270.0" width="1.9" height="2.0" fill="#0000ff"/><rect x="308.9" y="1272.4" width="3.0" height="2.1" fill="#0000ff"/><rect x="315.9" y="1270.4" width="1.6" height="2.5" fill="#0000ff"/><rect x="326.9" y="1271.5" width="3.0" height="1.9" fill="#0000ff"/><rect x="344.1" y="1272.1" width="2.1" height="2.3" fill="#0000ff"/><rect x="361.8" y="1273.9" width="2.2" height="1.7" fill="#0000ff"/><rect x="379.9" y="1271.7" width="1.9" height="1.6" fill="#0000ff"/><rect x="1129.2" y="1270.9" width="3.7" height="2.5" fill="#0000ff"/><rect x="1144.4" y="1273.3" width="2.6" height="2.9" fill="#0000ff"/><rect x="1161.1" y="1272.7" width="1.7" height="2.5" fill="#0000ff"/><rect x="1180.2" y="1271.2" width="2.2" height="2.5" fill="#0000ff"/><rect x="1179.8" y="1275.7" width="1.7" height="1.5" fill="#ff0000"/><rect x="1187.2" y="1270.1" width="3.4" height="1.9" fill="#0000ff"/><rect x="1191.6" y="1275.6" width="2.2" height="1.5" fill="#ff0000"/><rect x="1202.0" y="1273.2" width="3.7" height="2.8" fill="#0000ff"/><rect x="1200.9" y="1276.0" width="2.8" height="1.5" fill="#ff0000"/><rect x="1300.4" y="1270.5" width="1.9" height="1.9" fill="#0000ff"/><rect x="1315.8" y="1269.5" width="2.2" height="2.1" fill="#0000ff"/><rect x="1316.6" y="1276.7" width="2.5" height="1.5" fill="#ff0000"/><rect x="1330.1" y="1272.5" width="3.0" height="1.6" fill="#0000ff"/><rect x="1348.6" y="1273.1" width="3.7" height="2.1" fill="#0000ff"/><rect x="1343.8" y="1276.3" width="1.6" height="1.5" fill="#ff0000"/><rect x="1355.6" y="1270.2" width="2.0" height="2.0" fill="#0000ff"/><rect x="1349.6" y="1275.7" width="1.7" height="1.5" fill="#ff0000"/><rect x="1367.5" y="1273.4" width="1.6" height="2.4" fill="#0000ff"/><rect x="1364.5" y="1276.0" width="2.0" height="1.5" fill="#ff0000"/><rect x="1375.4" y="1274.0" width="3.6" height="2.2" fill="#0000ff"/><rect x="1382.8" y="1271.0" width="1.8" height="1.9" fill="#0000ff"/><rect x="1391.4" y="1273.8" width="1.6" height="2.3" fill="#0000ff"/><rect x="1391.9" y="1275.5" width="2.3" height="1.5" fill="#ff0000"/><rect x="1413.0" y="1272.6" width="3.7" height="1.9" fill="#0000ff"/><rect x="1409.0" y="1276.5" width="2.3" height="1.5" fill="#ff0000"/><rect x="1431.5" y="1270.5" width="2.3" height="2.7" fill="#0000ff"/><rect x="1451.1" y="1273.2" width="3.5" height="2.6" fill="#0000ff"/><rect x="1451.4" y="1276.0" width="1.5" height="1.5" fill="#ff0000"/><rect x="1457.6" y="1270.7" width="2.2" height="2.5" fill="#0000ff"/><rect x="1470.8" y="1273.9" width="3.8" height="2.9" fill="#0000ff"/><rect x="1467.4" y="1275.8" width="1.8" height="1.5" fill="#ff0000"/><rect x="1480.0" y="1273.6" width="3.1" height="2.8" fill="#0000ff"/><rect x="1496.5" y="1269.9" width="3.5" height="2.5" fill="#0000ff"/><rect x="1515.0" y="1271.7" width="3.4" height="1.8" fill="#0000ff"/><rect x="1526.3" y="1273.9" width="3.5" height="2.1" fill="#0000ff"/><rect x="1547.5" y="1270.3" width="3.3" height="1.7" fill="#0000ff"/><rect x="1552.3" y="1276.5" width="1.7" height="1.5" fill="#ff0000"/><rect x="1566.7" y="1272.5" width="4.0" height="2.0" fill="#0000ff"/><rect x="1574.8" y="1273.9" width="1.5" height="2.5" fill="#0000ff"/><path d="M230.5,1274 L230.5,1281 L231.2,1286 L236.2,1286 L237.8,1279 L238.8,1274 Z" fill="#0000ff"/><path d="M230.5,1274 L230.5,1262 L232.5,1259 L234.5,1259.5 L236.5,1263 L239.5,1269 L243,1273.8 Z" fill="#00ff00"/><rect x="1425.5" y="1139.5" width="142" height="256" fill="#fff" stroke="#262626" stroke-width="1"/><line x1="1432.4" y1="1156.3" x2="1502.5" y2="1156.3" stroke="#0000ff" stroke-width="4.8" /><text x="1508" y="1164.1" font-family="Liberation Sans, sans-serif" font-size="21" fill="#000">X</text><line x1="1432.4" y1="1184.2" x2="1502.5" y2="1184.2" stroke="#ff0000" stroke-width="4.8" /><text x="1508" y="1192.0" font-family="Liberation Sans, sans-serif" font-size="21" fill="#000">Y</text><line x1="1432.4" y1="1212.1" x2="1502.5" y2="1212.1" stroke="#00ff00" stroke-width="4.8" /><text x="1508" y="1219.9" font-family="Liberation Sans, sans-serif" font-size="21" fill="#000">Z</text><line x1="1432.4" y1="1239.9" x2="1502.5" y2="1239.9" stroke="#0000ff" stroke-width="4.8" stroke-dasharray="4.6 3.6"/><text x="1508" y="1247.7" font-family="Liberation Sans, sans-serif" font-size="21" fill="#000">data1</text><line x1="1432.4" y1="1267.8" x2="1502.5" y2="1267.8" stroke="#0000ff" stroke-width="4.8" stroke-dasharray="16.5 16"/><text x="1508" y="1275.6" font-family="Liberation Sans, sans-serif" font-size="21" fill="#000">data2</text><line x1="1432.4" y1="1295.7" x2="1502.5" y2="1295.7" stroke="#ff0000" stroke-width="4.8" stroke-dasharray="4.6 3.6"/><text x="1508" y="1303.5" font-family="Liberation Sans, sans-serif" font-size="21" fill="#000">data3</text><line x1="1432.4" y1="1323.6" x2="1502.5" y2="1323.6" stroke="#ff0000" stroke-width="4.8" stroke-dasharray="16.5 16"/><text x="1508" y="1331.4" font-family="Liberation Sans, sans-serif" font-size="21" fill="#000">data4</text><line x1="1432.4" y1="1351.5" x2="1502.5" y2="1351.5" stroke="#00ff00" stroke-width="4.8" stroke-dasharray="4.6 3.6"/><text x="1508" y="1359.3" font-family="Liberation Sans, sans-serif" font-size="21" fill="#000">data5</text><line x1="1432.4" y1="1379.3" x2="1502.5" y2="1379.3" stroke="#00ff00" stroke-width="4.8" stroke-dasharray="16.5 16"/><text x="1508" y="1387.1" font-family="Liberation Sans, sans-serif" font-size="21" fill="#000">data6</text></svg>
</body></html>
